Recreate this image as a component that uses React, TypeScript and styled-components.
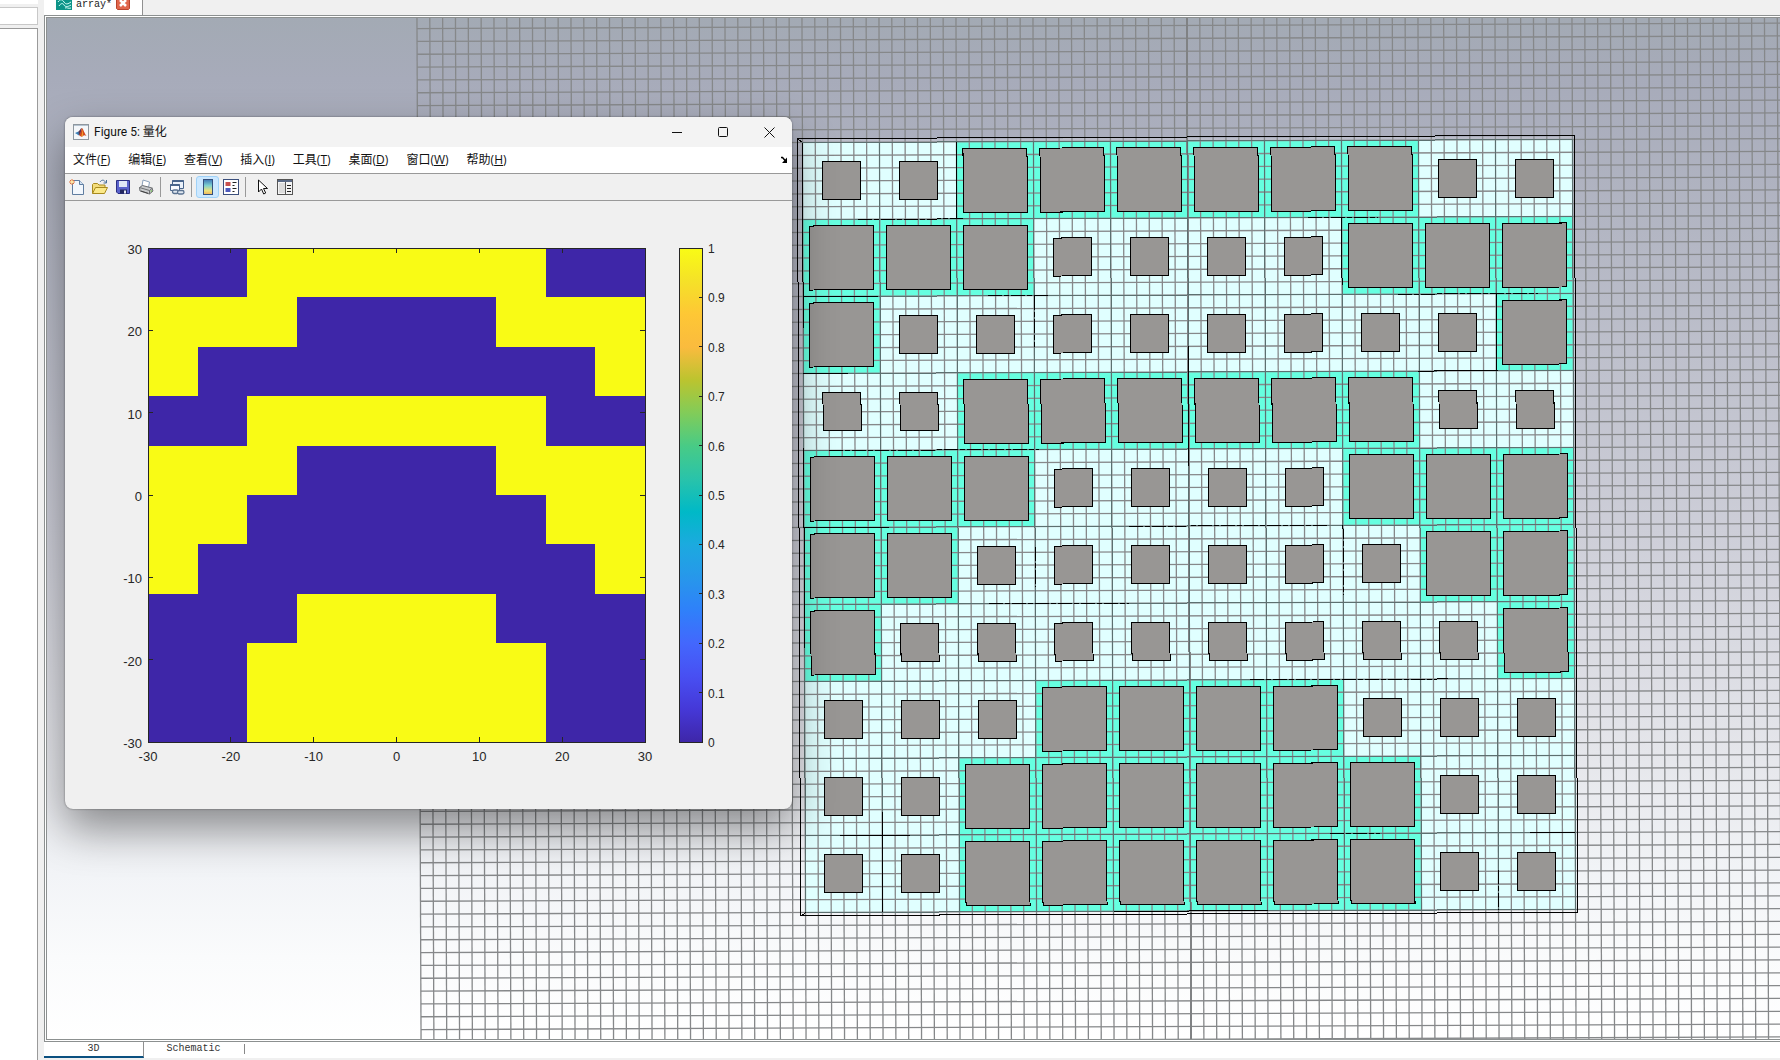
import React from "react";
import styled, { createGlobalStyle, css } from "styled-components";

const UI = `"Open Sans", "Noto Sans CJK SC", sans-serif`;
const MONO = `"Liberation Mono", monospace`;
const PLOT = `"Liberation Sans", sans-serif`;

const PATTERN = [
  "0011111100",
  "1110000111",
  "1000000001",
  "0011111100",
  "1110000111",
  "1100000011",
  "1000000001",
  "0001111000",
  "0011111100",
  "0011111100",
];

const CELLS = PATTERN.flatMap((line, row) =>
  line.split("").map((v, col) => ({ row, col, on: v === "1" }))
);

const GlobalStyle = createGlobalStyle`
  * { box-sizing: border-box; }
  body { margin: 0; background: #f0f0f0; font-family: ${UI}; }
  button { font: inherit; color: inherit; background: none; border: 0; padding: 0; }
`;

const Page = styled.div`
  display: flex;
  height: 100vh;
  overflow: hidden;
`;

const Sidebar = styled.aside`
  display: flex;
  flex-direction: column;
  gap: 3px;
  width: 38px;
  flex: none;
`;

const SideBox = styled.div<{ $h?: number; $line: string }>`
  background: #fff;
  border: 1px solid ${(p) => p.$line};
  border-left: 0;
  ${(p) => (p.$h ? css`height: ${p.$h}px;` : css`flex: 1; border-bottom: 0;`)}
`;

const Main = styled.main`
  flex: 1;
  min-width: 0;
  display: flex;
  flex-direction: column;
  margin-left: 6px;
  padding-bottom: 2px;
`;

const DocTabs = styled.div`
  display: flex;
  height: 15px;
`;

const DocTab = styled.div`
  display: flex;
  align-items: flex-end;
  gap: 4px;
  padding: 0 12px 5px;
  background: #fff;
  border-right: 1px solid #909090;
  font: 10px/10px ${MONO};
  color: #222;
  svg { display: block; }
`;

const TabName = styled.span`
  width: 36px;
`;

const ViewFrame = styled.div`
  flex: 1;
  min-height: 0;
  border: 1px solid #8c9090;
  border-right: 0;
  background: #fff;
  padding: 1px 0 1px 1px;
`;

const Viewport = styled.div`
  position: relative;
  height: 100%;
  border: 1px solid #8c9090;
  border-right: 0;
  background: linear-gradient(#a3aab4 0%, #a7abba 6%, #b4b7c4 22%, #cdced8 50%, #e5e6eb 72%, #f2f4f7 84%, #fafbfc 92%, #fff 100%);
  overflow: hidden;
`;

const Scene = styled.svg`
  display: block;
  width: 100%;
  height: 100%;
`;

const BottomTabs = styled.div`
  display: flex;
  height: 16px;
  background: #fff;
  color: #333;
`;

const BottomTab = styled.button<{ $active?: boolean }>`
  width: 100px;
  font: 10px/14px ${MONO};
  border-right: 1px solid ${(p) => (p.$active ? "#909090" : "transparent")};
  border-bottom: 2px solid ${(p) => (p.$active ? "#0a5080" : "transparent")};
`;

const BottomRule = styled.span`
  width: 1px;
  height: 10px;
  margin-top: 2px;
  background: #888;
`;

const FigureWindow = styled.section`
  position: absolute;
  left: 18px;
  top: 99px;
  width: 727px;
  background: #f0f0f0;
  border-radius: 8px;
  overflow: hidden;
  box-shadow: 0 0 2px rgba(0, 0, 0, 0.5), 0 20px 44px rgba(0, 0, 0, 0.42);
`;

const TitleBar = styled.header`
  display: flex;
  align-items: center;
  height: 30px;
  padding-left: 8px;
  background: #f3f3f3;
  svg { display: block; }
`;

const Title = styled.h1`
  flex: 1;
  margin: 0 0 0 5px;
  font: 400 12px/16px Roboto, "Noto Sans CJK SC", sans-serif;
  color: #111;
`;

const WinButton = styled.button`
  width: 46px;
  height: 30px;
  display: grid;
  place-items: center;
`;

const MenuBar = styled.nav`
  display: flex;
  align-items: center;
  gap: 18px;
  height: 26px;
  padding: 0 4px 0 8px;
  background: #fff;
  font: 12px/16px ${UI};
  color: #111;
  svg { margin-left: auto; display: block; }
`;

const MenuItem = styled.button`
  white-space: nowrap;
`;

const ToolBar = styled.div`
  display: flex;
  align-items: center;
  height: 28px;
  padding-bottom: 1px;
  border: solid #999;
  border-width: 1px 0;
  background: #f0f0f0;
`;

const Tool = styled.button<{ $active?: boolean }>`
  width: 23px;
  height: 22px;
  display: grid;
  place-items: center;
  border-radius: 3px;
  ${(p) => p.$active && css`background: #cce8ff; border: 1px solid #a0d2f8;`}
`;

const ToolRule = styled.span`
  width: 1px;
  height: 20px;
  margin: 0 4px 0 3px;
  background: #999;
`;

const Chart = styled.svg`
  display: block;
  width: 100%;
  font-family: ${PLOT};
`;

/* ---------- drawing of the antenna array ---------- */

const PITCH = 77;
const STEP = PITCH / 6;
const range = (a: number, b: number) => Array.from({ length: b - a + 1 }, (_, i) => a + i);

const DARK_EDGES = [
  [-231, -385, -231, -308, 0],
  [-154, -231, -154, -180, 1],
  [0, -180, 0, -60, 0],
  [-154, 20, -154, 60, 1],
  [-308, 285, -308, 385, 0],
  [154, -308, 154, -240, 0],
  [308, -231, 308, -154, 0],
  [77, 385, -77, 385, 0],
  [-385, -231, -310, -231, 0],
  [-330, -308, -225, -308, 1],
  [-385, -154, -340, -154, 0],
  [-200, -231, -140, -231, 1],
  [120, -308, 190, -308, 1],
  [210, -231, 350, -231, 1],
  [230, -154, 310, -154, 0],
  [-360, -77, -150, -77, 1],
  [-385, 0, -300, 0, 0],
  [-60, 0, 140, 0, 1],
  [-200, 77, -60, 77, 1],
  [60, 154, 260, 154, 1],
  [-350, 308, -280, 308, 0],
  [140, 308, 190, 308, 1],
  [340, 308, 385, 308, 0],
  [154, 0, 154, 70, 1],
  [308, 345, 308, 385, 1],
];

function ArrayScene() {
  return (
    <Scene viewBox="0 0 1733 1021" preserveAspectRatio="xMidYMid slice" role="img" aria-label="array model">
      <g transform="translate(1142 508) rotate(-0.23)" shapeRendering="crispEdges">
        <rect x="-390" y="-388" width="777" height="777" fill="#e8e9ee" fillOpacity="0.25" />
        {CELLS.map((c) => (
          <rect
            key={`b${c.row}-${c.col}`}
            x={-385 + c.col * PITCH}
            y={-385 + c.row * PITCH}
            width={PITCH}
            height={PITCH}
            fill={c.on ? "#66ffe0" : "#e0ffff"}
          />
        ))}
        <g stroke="#86888a" strokeWidth="1.3" shapeRendering="geometricPrecision">
          {range(-60, 60).map((i) => (
            <line key={`v${i}`} x1={i * STEP} x2={i * STEP} y1={-60 * STEP} y2={60 * STEP} />
          ))}
          {range(-60, 60).map((i) => (
            <line key={`h${i}`} y1={i * STEP} y2={i * STEP} x1={-60 * STEP} x2={60 * STEP} />
          ))}
        </g>
        <line x1="0" x2="0" y1="-770" y2="770" stroke="#808284" strokeWidth="2" />
        <g stroke="#5c7070" strokeWidth="1">
          {range(0, 10).map((i) => (
            <path key={i} d={`M${-385 + i * PITCH} -385V385M-385 ${-385 + i * PITCH}H385`} />
          ))}
        </g>
        <g stroke="#000" strokeWidth="1">
          {DARK_EDGES.map(([x1, y1, x2, y2, dash], i) => (
            <line key={i} x1={x1} y1={y1} x2={x2} y2={y2} strokeDasharray={dash ? "14 2 5 2" : undefined} />
          ))}
          <path d="M-385 -385V-200M-385 -80V120M-390 -389l5 4M-390 389l5 -4" fill="none" />
          <rect x="-390" y="-389" width="777" height="777" fill="none" />
        </g>
        {CELLS.map((c) => {
          const s = c.on ? 64 : 38;
          const o = (PITCH - s) / 2 - 385;
          return (
            <rect
              key={`p${c.row}-${c.col}`}
              x={o + c.col * PITCH}
              y={o + c.row * PITCH}
              width={s}
              height={s}
              fill="#989694"
              stroke="#000"
            />
          );
        })}
      </g>
    </Scene>
  );
}

/* ---------- quantisation plot ---------- */

const AX = { x: 83, y: 47, w: 497, h: 494 };
const BAR = { x: 614, w: 24 };
const TICKS = [-30, -20, -10, 0, 10, 20, 30];
const PARULA = [
  "#3e26a8", "#4538d7", "#484ff2", "#4367fd", "#2f80fa", "#2797eb", "#1caadf", "#00b9c7",
  "#29c3aa", "#48cb86", "#81cc59", "#bbc42f", "#fabb3e", "#fec735", "#f5e128", "#f9fb15",
];

function Plot() {
  const px = (v: number) => AX.x + ((v + 30) / 60) * AX.w;
  const py = (v: number) => AX.y + ((30 - v) / 60) * AX.h;
  return (
    <Chart viewBox="0 0 727 608" role="img" aria-label="Figure 5">
      <defs>
        <linearGradient id="parula" x1="0" y1="1" x2="0" y2="0">
          {PARULA.map((c, i) => (
            <stop key={c} offset={i / 15} stopColor={c} />
          ))}
        </linearGradient>
      </defs>
      <g shapeRendering="crispEdges">
        <rect x={AX.x} y={AX.y} width={AX.w} height={AX.h} fill="#3e26a8" />
        {CELLS.filter((c) => c.on).map((c) => (
          <rect
            key={`${c.row}-${c.col}`}
            x={AX.x + (c.col * AX.w) / 10}
            y={AX.y + (c.row * AX.h) / 10}
            width={AX.w / 10}
            height={AX.h / 10}
            fill="#f9fb15"
          />
        ))}
        <g stroke="#262626" fill="none">
          <rect x={AX.x + 0.5} y={AX.y + 0.5} width={AX.w} height={AX.h} />
          {TICKS.map((t) => (
            <path
              key={t}
              d={`M${px(t)} ${AX.y}v5M${px(t)} ${AX.y + AX.h}v-5M${AX.x} ${py(t)}h5M${AX.x + AX.w} ${py(t)}h-5`}
            />
          ))}
          <rect x={BAR.x + 0.5} y={AX.y + 0.5} width={BAR.w - 1} height={AX.h} fill="url(#parula)" />
          {range(1, 9).map((i) => (
            <path key={i} d={`M${BAR.x + BAR.w} ${AX.y + (i * AX.h) / 10}h-4`} />
          ))}
        </g>
      </g>
      <g fill="#262626" fontSize="13">
        {TICKS.map((t) => (
          <React.Fragment key={t}>
            <text x={77} y={py(t) + 6} textAnchor="end">{t}</text>
            <text x={px(t)} y={AX.y + AX.h + 19} textAnchor="middle">{t}</text>
          </React.Fragment>
        ))}
      </g>
      <g fill="#262626" fontSize="12">
        {range(0, 10).map((i) => (
          <text key={i} x={643} y={AX.y + AX.h - (i * AX.h) / 10 + 5}>{i / 10}</text>
        ))}
      </g>
    </Chart>
  );
}

/* ---------- icons ---------- */

const MatlabIcon = () => (
  <svg width="16" height="16" viewBox="0 0 16 16">
    <rect x=".5" y=".5" width="15" height="15" fill="#f4f7fa" stroke="#8e979f" />
    <path d="M1 1.5h14" stroke="#b4c3d0" />
    <path d="M2 9l3.500-1.500L8 10l-2 1.500z" fill="#3b7fb5" />
    <path d="M5.500 7.500C7 6.500 7.500 4 8.800 4L7.500 10.500 6 11z" fill="#5b3550" />
    <path d="M8.800 4c1.200 0 2.200 4.500 4.700 8-1.500-.800-2.500-1-3.500 0S8 13 6 11c1.500-1 2-4 2.800-7z" fill="#d1471f" />
    <path d="M8.800 4c.8 2 .5 5-.6 8.500C9 12.500 9.500 12 10 12c.5-3-.2-6-1.200-8z" fill="#f09a2c" />
  </svg>
);

const NewIcon = () => (
  <svg width="16" height="16" viewBox="0 0 16 16">
    <path d="M3.500 1.500h7l4 4v10h-11z" fill="#f2f7fd" stroke="#5f7da0" />
    <path d="M10.500 1.500v4h4" fill="#d2e1f2" stroke="#5f7da0" />
    <path d="M3 0v6M0 3h6M1 1l4 4M5 1L1 5" stroke="#e2733c" />
    <circle cx="3" cy="3" r="1.400" fill="#ffe9a0" />
  </svg>
);

const OpenIcon = () => (
  <svg width="16" height="16" viewBox="0 0 16 16">
    <path d="M.5 14.500v-9l1-1h4l1.500 1.500h6v3" fill="#f3dc7a" stroke="#a88a1e" />
    <path d="M.5 14.500l3-6h12l-3 6z" fill="#fbe989" stroke="#a88a1e" />
    <path d="M8 3c1.500-2.500 4.500-2.500 5.500 .5M14.500 1v3h-3" fill="none" stroke="#4c7198" />
  </svg>
);

const SaveIcon = () => (
  <svg width="16" height="16" viewBox="0 0 16 16">
    <path d="M1.500 1.500h13v13H3l-1.500-1.500z" fill="#5a62cc" stroke="#2b2f83" />
    <path d="M4 2h8v6H4z" fill="#dfe6f7" />
    <path d="M5 10.500h7v4H5z" fill="#24285f" />
    <path d="M9 11.500h2v3H9z" fill="#e8ecf7" />
  </svg>
);

const PrintIcon = () => (
  <svg width="16" height="16" viewBox="0 0 16 16">
    <path d="M4 7l1-6 6.500 2-1 5.500z" fill="#fff" stroke="#8aa0ba" />
    <path d="M1.500 8.500l3-2 9.500 2.500 1 3-3.500 3-9.500-3z" fill="#c9cbcd" stroke="#6d6f72" />
    <path d="M1.500 8.500l10 3 3-2.500M11.500 11.500V15" fill="none" stroke="#6d6f72" />
    <path d="M3 12l7 2.300" stroke="#444" />
    <circle cx="13.300" cy="12" r=".8" fill="#6bbf4b" />
  </svg>
);

const LinkIcon = () => (
  <svg width="16" height="16" viewBox="0 0 16 16" fill="none">
    <path d="M3.500 1.500h11v8h-11z" fill="#eaf1fa" stroke="#48658c" />
    <path d="M3.500 2h11" stroke="#48658c" strokeWidth="2" />
    <path d="M1.500 5.500h9v6h-9z" fill="#f8fbff" stroke="#48658c" />
    <path d="M1.500 6h9" stroke="#48658c" strokeWidth="2" />
    <rect x="3.500" y="11" width="6" height="3.500" rx="1.700" fill="#dfe7f0" stroke="#5b7391" strokeWidth="1.300" />
    <rect x="8.500" y="11.500" width="6.500" height="3.500" rx="1.700" fill="#dfe7f0" stroke="#5b7391" strokeWidth="1.300" />
  </svg>
);

const ColorbarIcon = () => (
  <svg width="16" height="16" viewBox="0 0 16 16">
    <defs>
      <linearGradient id="cbar" x1="0" y1="0" x2="0" y2="1">
        <stop offset="0" stopColor="#3f77b8" />
        <stop offset=".4" stopColor="#7dd0cf" />
        <stop offset=".75" stopColor="#eee27a" />
        <stop offset="1" stopColor="#efb15a" />
      </linearGradient>
    </defs>
    <rect x="3.500" y=".5" width="9" height="15" fill="url(#cbar)" stroke="#34507c" />
  </svg>
);

const LegendIcon = () => (
  <svg width="16" height="16" viewBox="0 0 16 16">
    <rect x=".5" y=".5" width="15" height="15" fill="#fff" stroke="#3b4f7c" />
    <path d="M2.500 3h5v4h-5z" fill="#c9504d" />
    <path d="M2.500 9h5v4h-5z" fill="#4d59bd" />
    <path d="M9.500 3.500h4M9.500 6.500h2M9.500 9.500h4M9.500 12.500h2" stroke="#222" />
  </svg>
);

const ArrowIcon = () => (
  <svg width="16" height="16" viewBox="0 0 16 16">
    <path d="M4.500 1v12l3-3 2.200 5 2-1-2.200-4.500h4z" fill="#fff" stroke="#111" />
  </svg>
);

const InspectorIcon = () => (
  <svg width="16" height="16" viewBox="0 0 16 16">
    <rect x=".5" y=".5" width="15" height="15" fill="#f4f4f4" stroke="#555" />
    <path d="M1 1h14v2H1z" fill="#5a6a86" />
    <path d="M2 4h6v10H2z" fill="#dcdcdc" />
    <path d="M8.500 3v12" stroke="#555" />
    <path d="M10 6.500h4M10 9.500h4M10 12.500h4" stroke="#222" />
  </svg>
);

const MENUS = [
  ["文件", "F"], ["编辑", "E"], ["查看", "V"], ["插入", "I"],
  ["工具", "T"], ["桌面", "D"], ["窗口", "W"], ["帮助", "H"],
];

function Figure() {
  return (
    <FigureWindow>
      <TitleBar>
        <MatlabIcon />
        <Title>Figure 5: 量化</Title>
        <WinButton aria-label="Minimize">
          <svg width="11" height="11"><path d="M0 5.500h10" stroke="#111" /></svg>
        </WinButton>
        <WinButton aria-label="Maximize">
          <svg width="11" height="11"><rect x=".5" y=".5" width="9" height="9" rx="1" fill="none" stroke="#111" /></svg>
        </WinButton>
        <WinButton aria-label="Close">
          <svg width="11" height="11"><path d="M.5 .5l10 10M10.500 .5l-10 10" stroke="#111" /></svg>
        </WinButton>
      </TitleBar>
      <MenuBar>
        {MENUS.map(([label, key]) => (
          <MenuItem key={key}>{label}(<u>{key}</u>)</MenuItem>
        ))}
        <svg width="8" height="8" viewBox="0 0 8 8">
          <path d="M1 1.500h1.500L6 5.500" fill="none" stroke="#000" strokeWidth="1.500" />
          <path d="M7 1.500V7H2z" fill="#000" />
        </svg>
      </MenuBar>
      <ToolBar>
        <Tool aria-label="New"><NewIcon /></Tool>
        <Tool aria-label="Open"><OpenIcon /></Tool>
        <Tool aria-label="Save"><SaveIcon /></Tool>
        <Tool aria-label="Print"><PrintIcon /></Tool>
        <ToolRule />
        <Tool aria-label="Link plot"><LinkIcon /></Tool>
        <ToolRule />
        <Tool aria-label="Insert colorbar" $active><ColorbarIcon /></Tool>
        <Tool aria-label="Insert legend"><LegendIcon /></Tool>
        <ToolRule />
        <Tool aria-label="Edit plot"><ArrowIcon /></Tool>
        <Tool aria-label="Property inspector"><InspectorIcon /></Tool>
      </ToolBar>
      <Plot />
    </FigureWindow>
  );
}

export default function App() {
  return (
    <>
      <GlobalStyle />
      <Page>
        <Sidebar>
          <SideBox $h={4} $line="#fff" />
          <SideBox $h={18} $line="#c8c8c8" />
          <SideBox $line="#9a9a9a" />
        </Sidebar>
        <Main>
          <DocTabs>
            <DocTab>
              <svg width="16" height="10" viewBox="0 0 16 10">
                <path d="M0 0h16v10H0z" fill="#0d9488" />
                <path d="M2 2c2-3 4-3 6 0s4 2 7 0M3 6c2-3 4-3 5-1s4 2 7 0M9 8c2-1 3 1 6 0" fill="none" stroke="#d8fffa" />
              </svg>
              <TabName>array*</TabName>
              <svg width="14" height="10" viewBox="0 0 14 10">
                <path d="M.5 0v8.500l1 1h11l1-1V0" fill="#e0664c" stroke="#b9442d" />
                <path d="M4 0l6 6M10 0l-6 6" stroke="#fff" strokeWidth="2.500" />
              </svg>
            </DocTab>
          </DocTabs>
          <ViewFrame>
            <Viewport>
              <ArrayScene />
              <Figure />
            </Viewport>
          </ViewFrame>
          <BottomTabs>
            <BottomTab $active>3D</BottomTab>
            <BottomTab>Schematic</BottomTab>
            <BottomRule />
          </BottomTabs>
        </Main>
      </Page>
    </>
  );
}
